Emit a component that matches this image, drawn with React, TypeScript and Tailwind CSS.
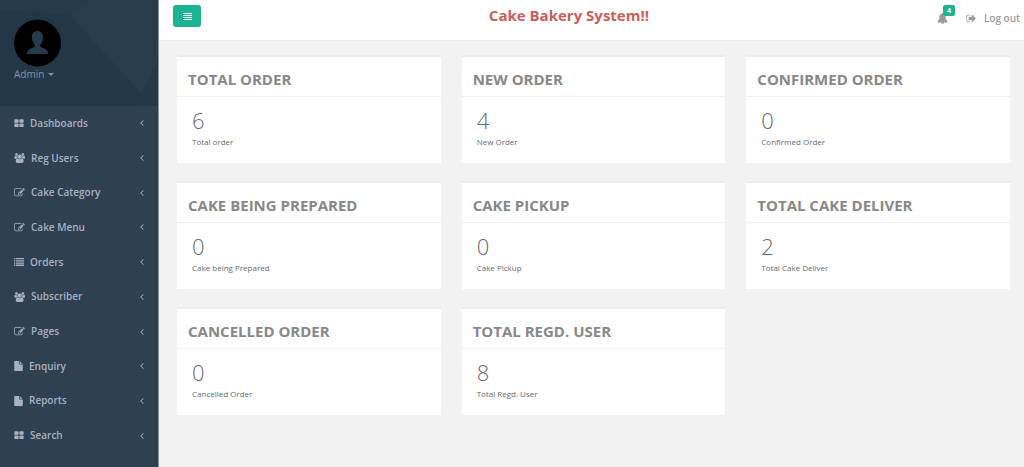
import React from "react";

type IconProps = { d: string; viewBox: string; className?: string };

function Glyph({ d, viewBox, className }: IconProps) {
  return (
    <svg viewBox={viewBox} className={className} fill="currentColor" aria-hidden="true">
      <path d={d} />
    </svg>
  );
}

const icons = {
  grid: {
    viewBox: "0 128 1792 1536",
    size: "h-[9px] w-[10px]",
    d: "M832 1024v384q0 52-38 90t-90 38h-512q-52 0-90-38t-38-90v-384q0-52 38-90t90-38h512q52 0 90 38t38 90zm0-768v384q0 52-38 90t-90 38h-512q-52 0-90-38t-38-90v-384q0-52 38-90t90-38h512q52 0 90 38t38 90zm896 768v384q0 52-38 90t-90 38h-512q-52 0-90-38t-38-90v-384q0-52 38-90t90-38h512q52 0 90 38t38 90zm0-768v384q0 52-38 90t-90 38h-512q-52 0-90-38t-38-90v-384q0-52 38-90t90-38h512q52 0 90 38t38 90z",
  },
  users: {
    viewBox: "0 0 1984 1792",
    size: "h-[10px] w-[11px]",
    d: "M657 896q-162 5-265 128h-134q-82 0-138-40.500t-56-118.500q0-353 124-353 6 0 43.500 21t97.500 42.500 119 21.500q67 0 133-23-5 37-5 66 0 139 81 256zm1071 637q0 120-73 189.500t-194 69.500h-874q-121 0-194-69.500t-73-189.500q0-53 3.500-103.500t14-109 26.500-108.500 43-97.500 62-81 85.500-53.500 111.500-20q10 0 43 21.500t73 48 107 48 135 21.500 135-21.500 107-48 73-48 43-21.500q61 0 111.500 20t85.500 53.500 62 81 43 97.500 26.500 108.500 14 109 3.500 103.500zm-1024-1277q0 106-75 181t-181 75-181-75-75-181 75-181 181-75 181 75 75 181zm704 384q0 159-112.500 271.500t-271.500 112.500-271.500-112.500-112.500-271.500 112.500-271.500 271.500-112.500 271.500 112.500 112.500 271.500zm576 225q0 78-56 118.500t-138 40.500h-134q-103-123-265-128 81-117 81-256 0-29-5-66 66 23 133 23 59 0 119-21.500t97.500-42.500 43.500-21q124 0 124 353zm-128-609q0 106-75 181t-181 75-181-75-75-181 75-181 181-75 181 75 75 181z",
  },
  edit: {
    viewBox: "0 128 1792 1536",
    size: "h-[9px] w-[11px]",
    d: "M888 1184l116-116-152-152-116 116v56h96v96h56zm440-720q-16-16-33 1l-350 350q-17 17-1 33t33-1l350-350q17-17 1-33zm80 594v190q0 119-84.500 203.500t-203.500 84.500h-832q-119 0-203.500-84.500t-84.500-203.500v-832q0-119 84.500-203.500t203.500-84.500h832q63 0 117 25 15 7 18 23 3 17-9 29l-49 49q-14 14-32 8-23-6-45-6h-832q-66 0-113 47t-47 113v832q0 66 47 113t113 47h832q66 0 113-47t47-113v-126q0-13 9-22l64-64q15-15 35-7t20 29zm-96-738l288 288-672 672h-288v-288zm444 132l-92 92-288-288 92-92q28-28 68-28t68 28l152 152q28 28 28 68t-28 68z",
  },
  list: {
    viewBox: "0 0 10 8",
    size: "h-[8px] w-[10px]",
    d: "M0 0h1.300v1.300H0zM0 2.200h1.300v1.300H0zM0 4.400h1.300v1.300H0zM0 6.600h1.300v1.300H0zM2 0h8v1.300H2zM2 2.200h8v1.300H2zM2 4.400h8v1.300H2zM2 6.600h8v1.300H2z",
  },
  file: {
    viewBox: "128 0 1536 1792",
    size: "h-[10px] w-[9px]",
    d: "M1152 512v-472q22 14 36 28l408 408q14 14 28 36h-472zm-128 32q0 40 28 68t68 28h544v1056q0 40-28 68t-68 28h-1344q-40 0-68-28t-28-68v-1600q0-40 28-68t68-28h800v544z",
  },
};

const chevron =
  "M1203 544q0 13-10 23l-393 393 393 393q10 10 10 23t-10 23l-50 50q-10 10-23 10t-23-10l-466-466q-10-10-10-23t10-23l466-466q10-10 23-10t23 10l50 50q10 10 10 23z";
const bell =
  "M912 1696q0-16-16-16-59 0-101.500-42.500t-42.500-101.500q0-16-16-16t-16 16q0 73 51.500 124.500t124.500 51.500q16 0 16-16zm816-288q0 52-38 90t-90 38h-448q0 106-75 181t-181 75-181-75-75-181h-448q-52 0-90-38t-38-90q50-42 91-88t85-119.500 74.500-158.500 50-206 19.500-260q0-152 117-282.500t307-158.500q-8-19-8-39 0-40 28-68t68-28 68 28 28 68q0 20-8 39 190 28 307 158.500t117 282.500q0 139 19.500 260t50 206 74.500 158.500 85 119.500 91 88z";
const signOut =
  "M704 1440q0 4 1 20t.5 26.500-3 23.500-10 19.500-20.500 6.500h-320q-119 0-203.500-84.500t-84.500-203.500v-704q0-119 84.500-203.500t203.500-84.500h320q13 0 22.500 9.500t9.500 22.500q0 4 1 20t.5 26.500-3 23.500-10 19.500-20.500 6.500h-320q-66 0-113 47t-47 113v704q0 66 47 113t113 47h312l11.500 1 11.500 3 8 5.500 7 9 2 13.500zm928-544q0 26-19 45l-544 544q-19 19-45 19t-45-19-19-45v-288h-448q-26 0-45-19t-19-45v-384q0-26 19-45t45-19h448v-288q0-26 19-45t45-19 45 19l544 544q19 19 19 45z";

const menu: { label: string; icon: keyof typeof icons }[] = [
  { label: "Dashboards", icon: "grid" },
  { label: "Reg Users", icon: "users" },
  { label: "Cake Category", icon: "edit" },
  { label: "Cake Menu", icon: "edit" },
  { label: "Orders", icon: "list" },
  { label: "Subscriber", icon: "users" },
  { label: "Pages", icon: "edit" },
  { label: "Enquiry", icon: "file" },
  { label: "Reports", icon: "file" },
  { label: "Search", icon: "grid" },
];

const stats = [
  { title: "TOTAL ORDER", value: 6, label: "Total order" },
  { title: "NEW ORDER", value: 4, label: "New Order" },
  { title: "CONFIRMED ORDER", value: 0, label: "Confirmed Order" },
  { title: "CAKE BEING PREPARED", value: 0, label: "Cake being Prepared" },
  { title: "CAKE PICKUP", value: 0, label: "Cake Pickup" },
  { title: "TOTAL CAKE DELIVER", value: 2, label: "Total Cake Deliver" },
  { title: "CANCELLED ORDER", value: 0, label: "Cancelled Order" },
  { title: "TOTAL REGD. USER", value: 8, label: "Total Regd. User" },
];

function Sidebar() {
  return (
    <aside className="w-[159px] shrink-0 border-r border-[#8b95a0] bg-[#2f4050]">
      <div className="relative h-[106px] overflow-hidden bg-[#263a49]">
        <svg viewBox="0 0 158 106" preserveAspectRatio="none" className="absolute inset-0 h-full w-full" aria-hidden="true">
          <path d="M0 9L70 15L142 94L130 106H0Z" fill="#243747" />
          <path d="M70 15L92 0H158V60L142 94Z" fill="#283c4b" />
          <path d="M142 94L158 60V106H130Z" fill="#253848" />
        </svg>
        <div className="relative px-[14px] pt-[19px]">
          <svg viewBox="0 0 48 48" className="h-[48px] w-[48px]" role="img" aria-label="Admin avatar">
            <circle cx="23.500" cy="24" r="23.500" fill="#000" />
            <path d="M23.500 12c3.500 0 5.600 2.600 5.600 6.500 0 3-1.200 5.500-2.700 6.800v2.200c2 2 7.800 2 7.800 7.500H12.800c0-5.500 5.800-5.500 7.800-7.500v-2.200c-1.500-1.300-2.700-3.800-2.700-6.800 0-3.900 2.100-6.500 5.600-6.500z" fill="#243b4c" />
          </svg>
          <button type="button" className="flex items-center gap-1 text-[10px] leading-[14px] text-[#8095a8]">
            Admin
            <svg viewBox="0 0 6 3" className="h-[3px] w-[6px]" fill="currentColor" aria-hidden="true">
              <path d="M0 0h6L3 3z" />
            </svg>
          </button>
        </div>
      </div>
      <nav>
        <ul className="grid h-[347px] auto-rows-fr">
          {menu.map((item) => {
            const icon = icons[item.icon];
            return (
              <li key={item.label} className="grid">
                <a href="#" className="flex items-center gap-[6px] pr-[14px] pl-[14px] text-[10px] font-semibold text-[#a7b1c2]">
                  <Glyph d={icon.d} viewBox={icon.viewBox} className={icon.size} />
                  <span className="flex-1">{item.label}</span>
                  <Glyph d={chevron} viewBox="560 448 704 1024" className="h-[6px] w-[4px]" />
                </a>
              </li>
            );
          })}
        </ul>
      </nav>
    </aside>
  );
}

function TopBar() {
  return (
    <header className="flex h-[41px] items-start border-b border-[#e9ebec] bg-white pr-1 pl-[14px]">
      <button type="button" aria-label="Toggle menu" className="mt-[5px] flex h-[22px] w-[28px] items-center justify-center rounded-[3px] bg-[#1ab394] text-white">
        <svg viewBox="0 0 9 7" className="h-[7px] w-[9px]" fill="currentColor" aria-hidden="true">
          <path d="M0 0h9v1H0zM0 2h9v1H0zM0 4h9v1H0zM0 6h9v1H0z" />
        </svg>
      </button>
      <h1 className="flex-1 pt-[5px] text-center text-[15px] leading-5 font-bold text-[#cd5c5c]">Cake Bakery System!!</h1>
      <div className="flex items-center gap-[18px] pt-[10px] text-[10px] leading-4 font-semibold text-[#999c9e]">
        <a href="#" aria-label="4 notifications" className="relative">
          <Glyph d={bell} viewBox="0 0 1792 1792" className="h-[11px] w-[11px]" />
          <span className="absolute -top-[8px] left-[6px] rounded-[2px] bg-[#1ab394] px-[4px] text-[7px] leading-[11px] font-bold text-white">4</span>
        </a>
        <a href="#" className="flex items-center gap-2">
          <Glyph d={signOut} viewBox="0 0 1664 1792" className="h-[11px] w-[10px]" />
          Log out
        </a>
      </div>
    </header>
  );
}

function StatCard({ title, value, label }: { title: string; value: number; label: string }) {
  return (
    <section className="border-t-2 border-[#ebeced] bg-white">
      <h2 className="border-b border-[#f0f1f2] px-[11px] pt-[12px] pb-[6px] text-[15px] leading-[21px] font-bold text-[#888888]">{title}</h2>
      <div className="px-[15px] pt-[9px] pb-[15px] text-[#676a6c]">
        <p className="pb-[2px] text-[22px] leading-[28px] font-light">{value}</p>
        <p className="text-[8px] leading-[12px]">{label}</p>
      </div>
    </section>
  );
}

export default function App() {
  return (
    <div className="flex min-h-screen bg-[#f2f2f2] font-['Open_Sans',sans-serif]">
      <Sidebar />
      <div className="min-w-0 flex-1">
        <TopBar />
        <main className="grid grid-cols-3 gap-x-[21px] gap-y-[18px] pt-[14px] pr-[14px] pb-4 pl-[18px]">
          {stats.map((stat) => (
            <StatCard key={stat.title} {...stat} />
          ))}
        </main>
      </div>
    </div>
  );
}
